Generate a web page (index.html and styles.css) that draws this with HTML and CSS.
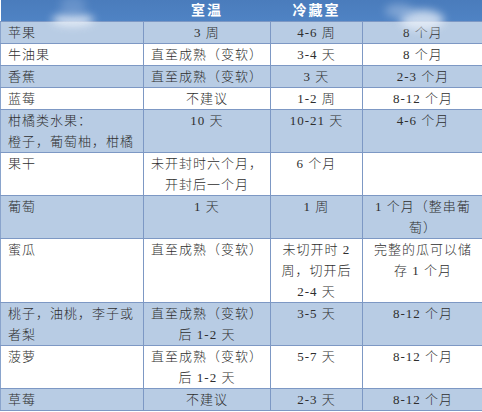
FILE: index.html
```html
<!DOCTYPE html>
<html lang="zh">
<head>
<meta charset="utf-8">
<link rel="stylesheet" href="styles.css">
</head>
<body>
<div class="wrap">
<table class="t">
<colgroup><col class="c1"><col class="c2"><col class="c3"><col class="c4"></colgroup>
<thead>
<tr class="hd"><th></th><th>室温</th><th>冷藏室</th><th></th></tr>
</thead>
<tbody>
<tr class="b"><td>苹果</td><td>3 周</td><td>4-6 周</td><td>8 个月</td></tr>
<tr class="w"><td>牛油果</td><td>直至成熟（变软）</td><td>3-4 天</td><td>8 个月</td></tr>
<tr class="b"><td>香蕉</td><td>直至成熟（变软）</td><td>3 天</td><td>2-3 个月</td></tr>
<tr class="w"><td>蓝莓</td><td>不建议</td><td>1-2 周</td><td>8-12 个月</td></tr>
<tr class="b"><td>柑橘类水果：<br>橙子，葡萄柚，柑橘</td><td>10 天</td><td>10-21 天</td><td>4-6 个月</td></tr>
<tr class="w"><td>果干</td><td>未开封时六个月，<br>开封后一个月</td><td>6 个月</td><td></td></tr>
<tr class="b"><td>葡萄</td><td>1 天</td><td>1 周</td><td>1 个月（整串葡<br>萄）</td></tr>
<tr class="w"><td>蜜瓜</td><td>直至成熟（变软）</td><td>未切开时 2<br>周，切开后<br>2-4 天</td><td>完整的瓜可以储<br>存 1 个月</td></tr>
<tr class="b"><td>桃子，油桃，李子或<br>者梨</td><td>直至成熟（变软）<br>后 1-2 天</td><td>3-5 天</td><td>8-12 个月</td></tr>
<tr class="w"><td>菠萝</td><td>直至成熟（变软）<br>后 1-2 天</td><td>5-7 天</td><td>8-12 个月</td></tr>
<tr class="b"><td>草莓</td><td>不建议</td><td>2-3 天</td><td>8-12 个月</td></tr>
</tbody>
</table>
<div class="cloud cloud-a"></div>
<div class="cloud cloud-b"></div>
<div class="cloud cloud-c"></div>
<div class="cloud cloud-d"></div>
</div>
</body>
</html>
```
FILE: styles.css
```css
html, body {
  margin: 0;
  padding: 0;
  background: #ffffff;
}
.wrap {
  position: relative;
  width: 482px;
  height: 412px;
  overflow: hidden;
}
.t {
  border-collapse: collapse;
  table-layout: fixed;
  width: 483px;
  font-family: "Liberation Serif", "Noto Sans CJK SC", serif;
  font-size: 13px;
  font-weight: 300;
  letter-spacing: 1px;
  color: #2e2e2e;
}
.c1 { width: 143px; }
.c2 { width: 127px; }
.c3 { width: 92px; }
.c4 { width: 121px; }
.t td {
  border: 1px solid #7d98c4;
  padding: 0 2px;
  height: 21px;
  line-height: 21px;
  vertical-align: top;
  text-align: center;
  white-space: nowrap;
}
.t td:first-child {
  text-align: left;
  padding-left: 7px;
  border-left: 1px solid #8aa4cc;
}
.hd th {
  height: 21px;
  padding: 0;
  line-height: 21px;
  background: linear-gradient(#4a7cbc, #4f83c4);
  color: #ffffff;
  font-weight: bold;
  font-size: 14px;
  letter-spacing: 2px;
  border: none;
  border-bottom: 1px solid #7d98c4;
}
.b td { background: #b8cce4; }
.w td { background: #ffffff; }
.cloud {
  position: absolute;
  border-radius: 50%;
  background: #eef3fa;
  filter: blur(4px);
  opacity: 0.85;
}
.cloud-a {
  left: 52px;
  top: 14px;
  width: 42px;
  height: 12px;
}
.cloud-b {
  left: 400px;
  top: 10px;
  width: 44px;
  height: 20px;
  opacity: 0.75;
}
.cloud-d {
  left: 385px;
  top: 4px;
  width: 28px;
  height: 14px;
  background: #9fbbe0;
  opacity: 0.6;
}
.cloud-c {
  left: 60px;
  top: -4px;
  width: 26px;
  height: 20px;
  background: #7aa0d2;
  opacity: 0.6;
}
```
